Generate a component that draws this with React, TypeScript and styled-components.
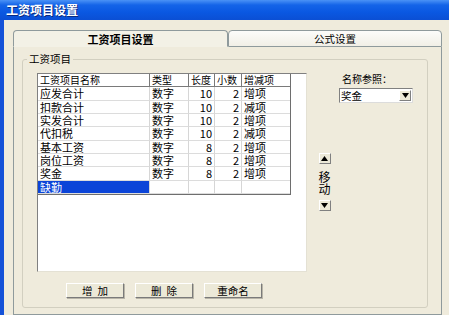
import React from "react";
import styled, { createGlobalStyle } from "styled-components";

const Global = createGlobalStyle`
  html, body { margin: 0; padding: 0; }
  body {
    font-family: "Noto Sans CJK SC", "Noto Sans", sans-serif;
    font-size: 11px;
    color: #000;
  }
  * { box-sizing: border-box; }
`;

const Window = styled.div`
  width: 449px;
  height: 315px;
  overflow: hidden;
  display: flex;
  flex-direction: column;
  background: #1552d8;
`;

const TitleBar = styled.div`
  height: 20px;
  flex: none;
  display: flex;
  align-items: center;
  padding-left: 6px;
  background: linear-gradient(to bottom, #4a92f6 0%, #1464e8 25%, #0a58e2 60%, #0b4fd4 100%);
  color: #fff;
  font-weight: bold;
  font-size: 12px;
  line-height: 14px;
  text-shadow: 1px 1px 0 #0a2a80;
`;

const Body = styled.div`
  flex: 1;
  margin-left: 4px;
  background: #efebdc;
  padding: 10px 0 0 9px;
  display: flex;
  flex-direction: column;
`;

const TabRow = styled.div`
  display: flex;
  width: 429px;
  height: 17px;
  flex: none;
`;

const Tab = styled.div<{ $active?: boolean; $w: number }>`
  width: ${(p) => p.$w}px;
  height: 17px;
  display: flex;
  align-items: center;
  justify-content: center;
  border: 1px solid #8f9a9c;
  border-bottom-color: ${(p) => (p.$active ? "#f3f1e6" : "#8f9a9c")};
  border-radius: 4px 4px 0 0;
  background: ${(p) =>
    p.$active ? "#f3f1e6" : "linear-gradient(to bottom, #fcfcfa, #f1efe6)"};
  font-weight: ${(p) => (p.$active ? "bold" : "normal")};
  font-size: ${(p) => (p.$active ? "11px" : "10.5px")};
  line-height: 12px;
`;

const Panel = styled.div`
  flex: 1;
  width: 429px;
  border: 1px solid #8f9a9c;
  border-top: none;
  background: #efebdc;
  padding: 12px 14px 0 8px;
`;

const GroupBox = styled.div`
  position: relative;
  width: 406px;
  height: 249px;
  border: 1px solid #d2cfc0;
  border-radius: 3px;
  padding: 13px 0 0 14px;
`;

const Legend = styled.span`
  position: absolute;
  left: 4px;
  top: -7px;
  padding: 0 2px;
  background: #efebdc;
  line-height: 12px;
  font-size: 10.5px;
`;

const MainRow = styled.div`
  display: flex;
  align-items: flex-start;
`;

const GridBox = styled.div`
  width: 270px;
  height: 199px;
  background: #fff;
  border-top: 1px solid #808080;
  border-left: 1px solid #808080;
  border-right: 1px solid #e4e1d4;
  border-bottom: 1px solid #e4e1d4;
`;

const Table = styled.div`
  width: 253px;
  border-right: 1px solid #6e6e6e;
  border-bottom: 1px solid #6e6e6e;
`;

const Row = styled.div`
  display: grid;
  grid-template-columns: 112px 39px 26px 27px 48px;
  height: 13.33px;
`;

const HeadCell = styled.div<{ $right?: boolean }>`
  border-right: 1px solid #7a7a7a;
  border-bottom: 1px solid #7a7a7a;
  padding: 0 2px;
  line-height: 12px;
  font-size: 10px;
  white-space: nowrap;
  text-align: ${(p) => (p.$right ? "right" : "left")};
  &:last-child { border-right: none; }
`;

const Cell = styled.div<{ $right?: boolean; $sel?: boolean }>`
  border-right: 1px solid #d6d6d6;
  border-bottom: 1px solid #dcdcdc;
  padding: 0 2px;
  line-height: 12px;
  font-size: 11px;
  white-space: nowrap;
  text-align: ${(p) => (p.$right ? "right" : "left")};
  background: ${(p) => (p.$sel ? "#0b44d8" : "#fff")};
  color: ${(p) => (p.$sel ? "#fff" : "#000")};
  &:last-child { border-right: none; }
`;

const MoveCol = styled.div`
  margin-left: 11px;
  width: 13px;
  padding-top: 80px;
  display: flex;
  flex-direction: column;
  align-items: center;
`;

const ArrowBtn = styled.div`
  width: 12px;
  height: 11px;
  display: flex;
  align-items: center;
  justify-content: center;
  background: #ece9d8;
  border-top: 1px solid #fff;
  border-left: 1px solid #fff;
  border-right: 1px solid #808080;
  border-bottom: 1px solid #808080;
`;

const MoveText = styled.div`
  font-size: 12px;
  line-height: 12px;
  margin: 7px 0 5px;
  text-align: center;
`;

const RefCol = styled.div`
  margin-left: 8px;
  margin-top: -1px;
  display: flex;
  flex-direction: column;
`;

const RefLabel = styled.div`
  font-size: 10px;
  line-height: 13px;
  padding-left: 3px;
`;

const Select = styled.div`
  margin-top: 3px;
  width: 74px;
  height: 15px;
  background: #fff;
  border-top: 1px solid #808080;
  border-left: 1px solid #808080;
  border-right: 1px solid #dcdcdc;
  border-bottom: 1px solid #dcdcdc;
  display: flex;
  align-items: center;
  justify-content: space-between;
  padding-left: 1px;
  font-size: 10.5px;
  line-height: 12px;
`;

const DropBtn = styled.div`
  width: 12px;
  height: 11px;
  margin-right: 1px;
  display: flex;
  align-items: center;
  justify-content: center;
  background: #ece9d8;
  border-top: 1px solid #fff;
  border-left: 1px solid #fff;
  border-right: 1px solid #808080;
  border-bottom: 1px solid #808080;
`;

const ButtonRow = styled.div`
  display: flex;
  gap: 11px;
  margin-top: 11px;
  padding-left: 29px;
`;

const Button = styled.div<{ $spaced?: boolean }>`
  width: 58px;
  height: 15px;
  display: flex;
  align-items: center;
  justify-content: center;
  background: #ece9d8;
  border-top: 1px solid #fff;
  border-left: 1px solid #fff;
  border-right: 1px solid #7a7a7a;
  border-bottom: 1px solid #7a7a7a;
  box-shadow: 1px 1px 0 #b8b5a8;
  font-size: 10.5px;
  line-height: 12px;
  letter-spacing: ${(p) => (p.$spaced ? "5px" : "0")};
  padding-left: ${(p) => (p.$spaced ? "5px" : "0")};
`;

const Tri = ({ down }: { down?: boolean }) => (
  <svg width="7" height="5" viewBox="0 0 7 5">
    <polygon points={down ? "0,0 7,0 3.5,5" : "0,5 7,5 3.5,0"} fill="#000" />
  </svg>
);

const rows: [string, string, string, string, string][] = [
  ["应发合计", "数字", "10", "2", "增项"],
  ["扣款合计", "数字", "10", "2", "减项"],
  ["实发合计", "数字", "10", "2", "增项"],
  ["代扣税", "数字", "10", "2", "减项"],
  ["基本工资", "数字", "8", "2", "增项"],
  ["岗位工资", "数字", "8", "2", "增项"],
  ["奖金", "数字", "8", "2", "增项"],
];

export default function App() {
  return (
    <>
      <Global />
      <Window>
        <TitleBar>工资项目设置</TitleBar>
        <Body>
          <TabRow>
            <Tab $active $w={215}>工资项目设置</Tab>
            <Tab $w={214}>公式设置</Tab>
          </TabRow>
          <Panel>
            <GroupBox>
              <Legend>工资项目</Legend>
              <MainRow>
                <GridBox>
                  <Table>
                    <Row>
                      <HeadCell>工资项目名称</HeadCell>
                      <HeadCell>类型</HeadCell>
                      <HeadCell>长度</HeadCell>
                      <HeadCell>小数</HeadCell>
                      <HeadCell>增减项</HeadCell>
                    </Row>
                    {rows.map((r) => (
                      <Row key={r[0]}>
                        <Cell>{r[0]}</Cell>
                        <Cell>{r[1]}</Cell>
                        <Cell $right>{r[2]}</Cell>
                        <Cell $right>{r[3]}</Cell>
                        <Cell>{r[4]}</Cell>
                      </Row>
                    ))}
                    <Row>
                      <Cell $sel>缺勤</Cell>
                      <Cell />
                      <Cell />
                      <Cell />
                      <Cell />
                    </Row>
                  </Table>
                </GridBox>
                <MoveCol>
                  <ArrowBtn><Tri /></ArrowBtn>
                  <MoveText>移<br />动</MoveText>
                  <ArrowBtn><Tri down /></ArrowBtn>
                </MoveCol>
                <RefCol>
                  <RefLabel>名称参照：</RefLabel>
                  <Select>
                    奖金
                    <DropBtn><Tri down /></DropBtn>
                  </Select>
                </RefCol>
              </MainRow>
              <ButtonRow>
                <Button $spaced>增加</Button>
                <Button $spaced>删除</Button>
                <Button>重命名</Button>
              </ButtonRow>
            </GroupBox>
          </Panel>
        </Body>
      </Window>
    </>
  );
}
